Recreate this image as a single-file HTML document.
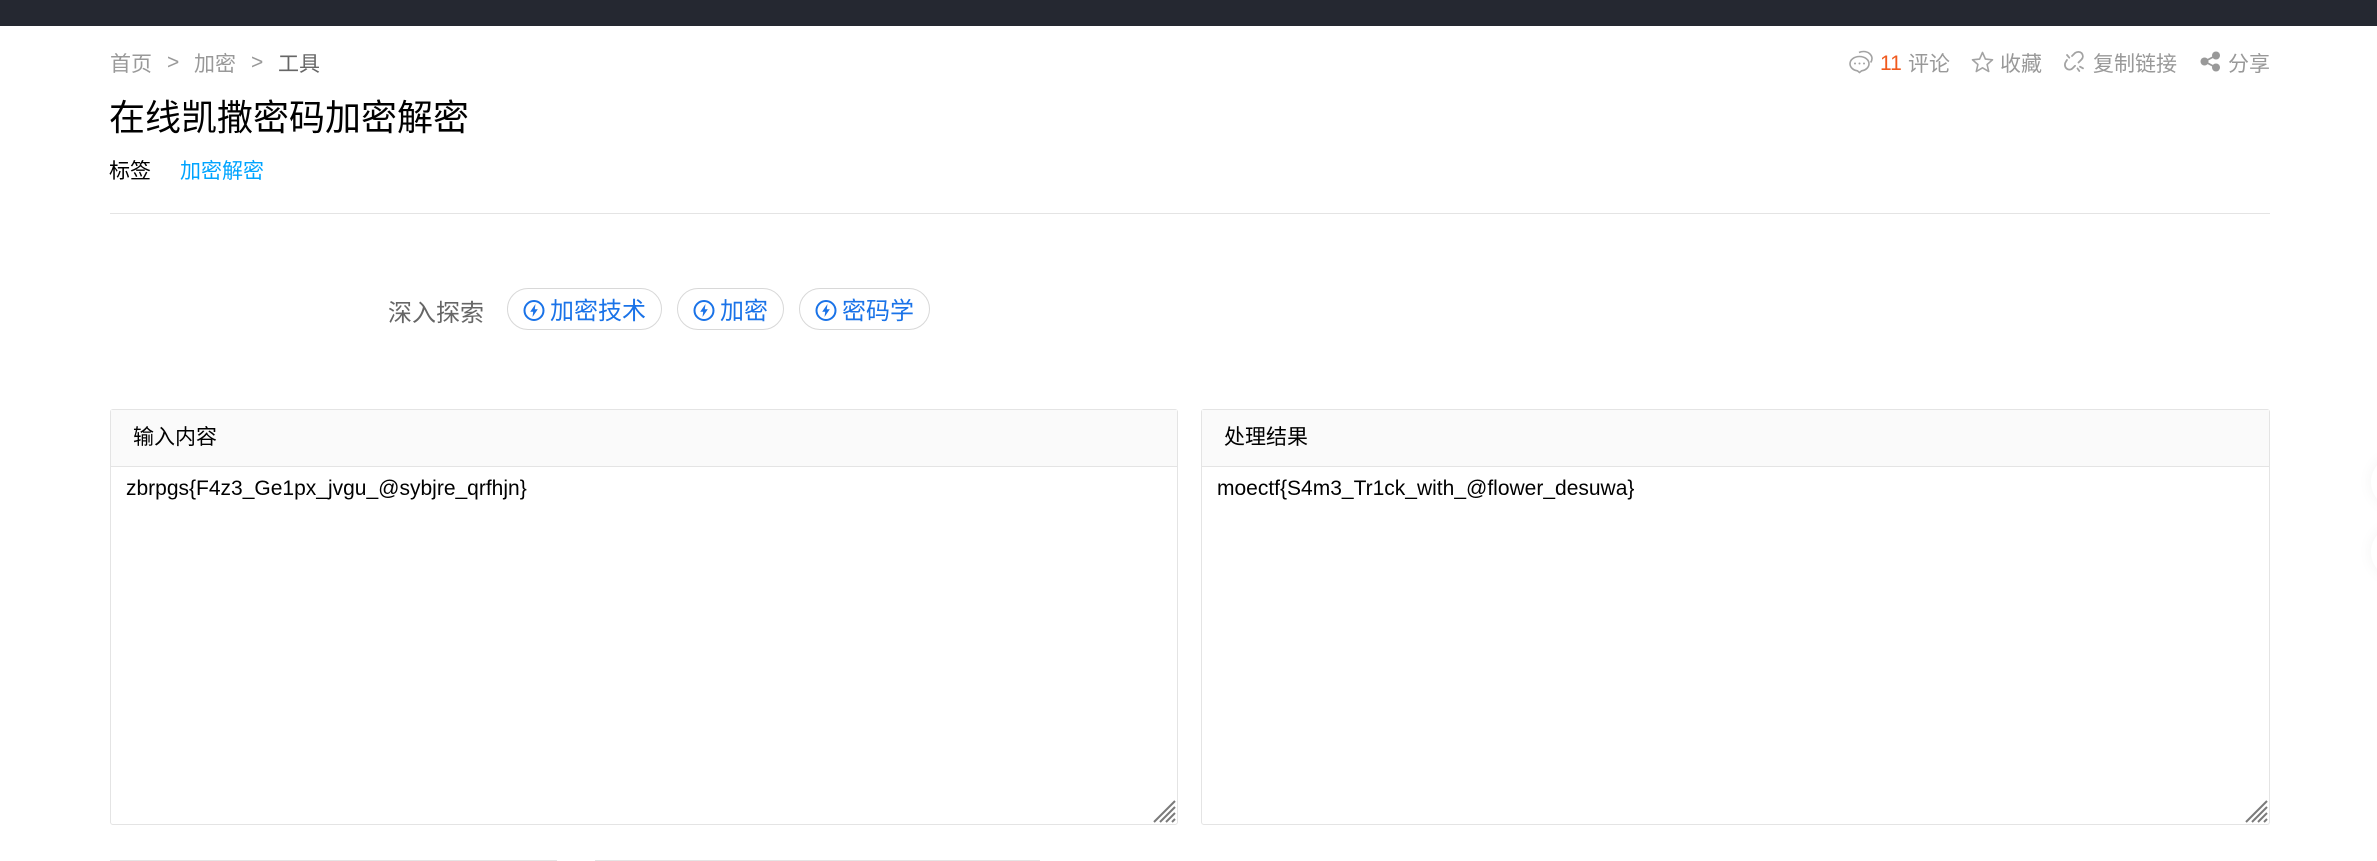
<!DOCTYPE html>
<html lang="zh-CN">
<head>
<meta charset="utf-8">
<title>在线凯撒密码加密解密</title>
<style>
html,body{margin:0;padding:0;background:#fff;}
body{width:2377px;height:861px;overflow:hidden;position:relative;font-family:"Liberation Sans","Noto Sans CJK SC",sans-serif;}
.t{position:absolute;white-space:nowrap;line-height:30px;font-size:21px;}
.g{color:#999;}
.box{position:absolute;box-sizing:border-box;border:1px solid #e4e4e4;border-radius:3px;background:#fff;}
.hd{position:absolute;box-sizing:border-box;left:0;top:0;right:0;height:57px;background:#fafafa;border-bottom:1px solid #e4e4e4;}
.pill{position:absolute;box-sizing:border-box;top:288px;height:42px;border:1px solid #d8d8d8;border-radius:21px;background:#fff;}
.circ{position:absolute;width:52px;height:52px;border-radius:50%;background:#fff;box-shadow:0 0 15px rgba(0,0,0,.05);}
.blue{color:#1a73e8;font-size:24px;}
svg{position:absolute;left:0;top:0;}
</style>
</head>
<body>
<div style="position:absolute;left:0;top:0;width:2377px;height:26px;background:#252831;"></div>

<div class="t g" style="left:110px;top:50px;">首页</div>
<div class="t g" style="left:167px;top:48px;">&gt;</div>
<div class="t g" style="left:194px;top:50px;">加密</div>
<div class="t g" style="left:251px;top:48px;">&gt;</div>
<div class="t" style="left:278px;top:50px;color:#666;">工具</div>

<div class="t" style="left:109px;top:98px;font-size:36px;line-height:40px;color:#000;">在线凯撒密码加密解密</div>
<div class="t" style="left:109px;top:157px;color:#000;">标签</div>
<div class="t" style="left:180px;top:157px;color:#00a4ff;">加密解密</div>
<div style="position:absolute;left:110px;top:213px;width:2160px;height:1px;background:#e4e4e4;"></div>

<div class="t" style="left:1880px;top:49px;color:#f05a1e;">11</div>
<div class="t g" style="left:1908px;top:50px;">评论</div>
<div class="t g" style="left:2000px;top:50px;">收藏</div>
<div class="t g" style="left:2093px;top:50px;">复制链接</div>
<div class="t g" style="left:2228px;top:50px;">分享</div>

<div class="t" style="left:388px;top:299px;font-size:24px;color:#666;">深入探索</div>
<div class="pill" style="left:507px;width:155px;"></div>
<div class="pill" style="left:677px;width:107px;"></div>
<div class="pill" style="left:799px;width:131px;"></div>
<div class="t blue" style="left:550px;top:297px;">加密技术</div>
<div class="t blue" style="left:720px;top:297px;">加密</div>
<div class="t blue" style="left:842px;top:297px;">密码学</div>

<div class="box" style="left:110px;top:409px;width:1068px;height:416px;"><div class="hd"></div></div>
<div class="box" style="left:1201px;top:409px;width:1069px;height:416px;"><div class="hd"></div></div>
<div class="t" style="left:133px;top:423px;color:#000;">输入内容</div>
<div class="t" style="left:1224px;top:423px;color:#000;">处理结果</div>
<div class="t" style="left:126px;top:474px;color:#000;">zbrpgs{F4z3_Ge1px_jvgu_@sybjre_qrfhjn}</div>
<div class="t" style="left:1217px;top:474px;color:#000;">moectf{S4m3_Tr1ck_with_@flower_desuwa}</div>

<div style="position:absolute;left:110px;top:860px;width:447px;height:1px;background:#e4e4e4;"></div>
<div style="position:absolute;left:595px;top:860px;width:445px;height:1px;background:#e4e4e4;"></div>

<div class="circ" style="left:2371px;top:456px;"></div>
<div class="circ" style="left:2371px;top:526px;"></div>

<svg width="2377" height="861" viewBox="0 0 2377 861" fill="none">
  <!-- comment -->
  <g stroke="#a3a3a3" stroke-width="1.600">
    <path d="M1859.500 56.500c-5.300 0-9.500 3.300-9.500 7.300 0 3.500 3.100 6.400 7.300 7l2.200 1.700 2.200-1.700c4.200-.6 7.300-3.500 7.300-7 0-4-4.200-7.300-9.500-7.300z"/>
    <path d="M1859 52.500c1.200-.6 2.800-1 4.500-1 4.800 0 8.500 3.200 8.500 7 0 1.500-.5 2.800-1.400 4"/>
  </g>
  <g fill="#a3a3a3"><circle cx="1855" cy="63.500" r="1"/><circle cx="1859.500" cy="63.500" r="1"/><circle cx="1864" cy="63.500" r="1"/></g>
  <!-- star -->
  <path d="M1982.500 52.500l2.900 6.600 7.100.7-5.400 4.700 1.600 7-6.200-3.700-6.200 3.700 1.600-7-5.400-4.700 7.100-.7z" stroke="#a3a3a3" stroke-width="1.600" stroke-linejoin="round"/>
  <!-- broken link -->
  <g stroke="#a3a3a3" stroke-width="1.800" stroke-linecap="round">
    <path d="M2072 56l3-3c2-1.500 5-1.500 6.500 0 1.800 2 1.800 4.500 0 6.500l-3 3"/>
    <path d="M2067 60l-1 1.500c-1.500 2-1.500 5 .3 6.800 1.800 1.800 4.500 1.800 6.300 0l2.500-2.500"/>
    <path d="M2067 55l2.300 2.700M2080 66.700l3 1.600M2077.500 68.500l1.800 2.500"/>
  </g>
  <!-- share -->
  <g fill="#999"><circle cx="2216" cy="55.500" r="4"/><circle cx="2204.500" cy="61.500" r="4"/><circle cx="2216" cy="67.500" r="4"/></g>
  <path d="M2216 55.500L2204.500 61.500L2216 67.500" stroke="#999" stroke-width="1.800"/>
  <!-- bolts -->
  <g stroke="#1a73e8" stroke-width="2">
    <circle cx="534" cy="310.500" r="9.500"/><circle cx="704" cy="310.500" r="9.500"/><circle cx="826" cy="310.500" r="9.500"/>
  </g>
  <g fill="#1a73e8">
    <path transform="translate(534 310.500)" d="M1.500-6.500L-3.800 1.200H-.8L-1.500 6.500 3.800-1.200H.8z"/>
    <path transform="translate(704 310.500)" d="M1.500-6.500L-3.800 1.200H-.8L-1.500 6.500 3.800-1.200H.8z"/>
    <path transform="translate(826 310.500)" d="M1.500-6.500L-3.800 1.200H-.8L-1.500 6.500 3.800-1.200H.8z"/>
  </g>
  <!-- resizers -->
  <g stroke="#7a7a7a" stroke-width="2">
    <path d="M1154 822L1175 801M1160 822L1175 807M1166 822L1175 813M1172 822L1175 819"/>
    <path d="M2246 822L2267 801M2252 822L2267 807M2258 822L2267 813M2264 822L2267 819"/>
  </g>
</svg>
</body>
</html>
